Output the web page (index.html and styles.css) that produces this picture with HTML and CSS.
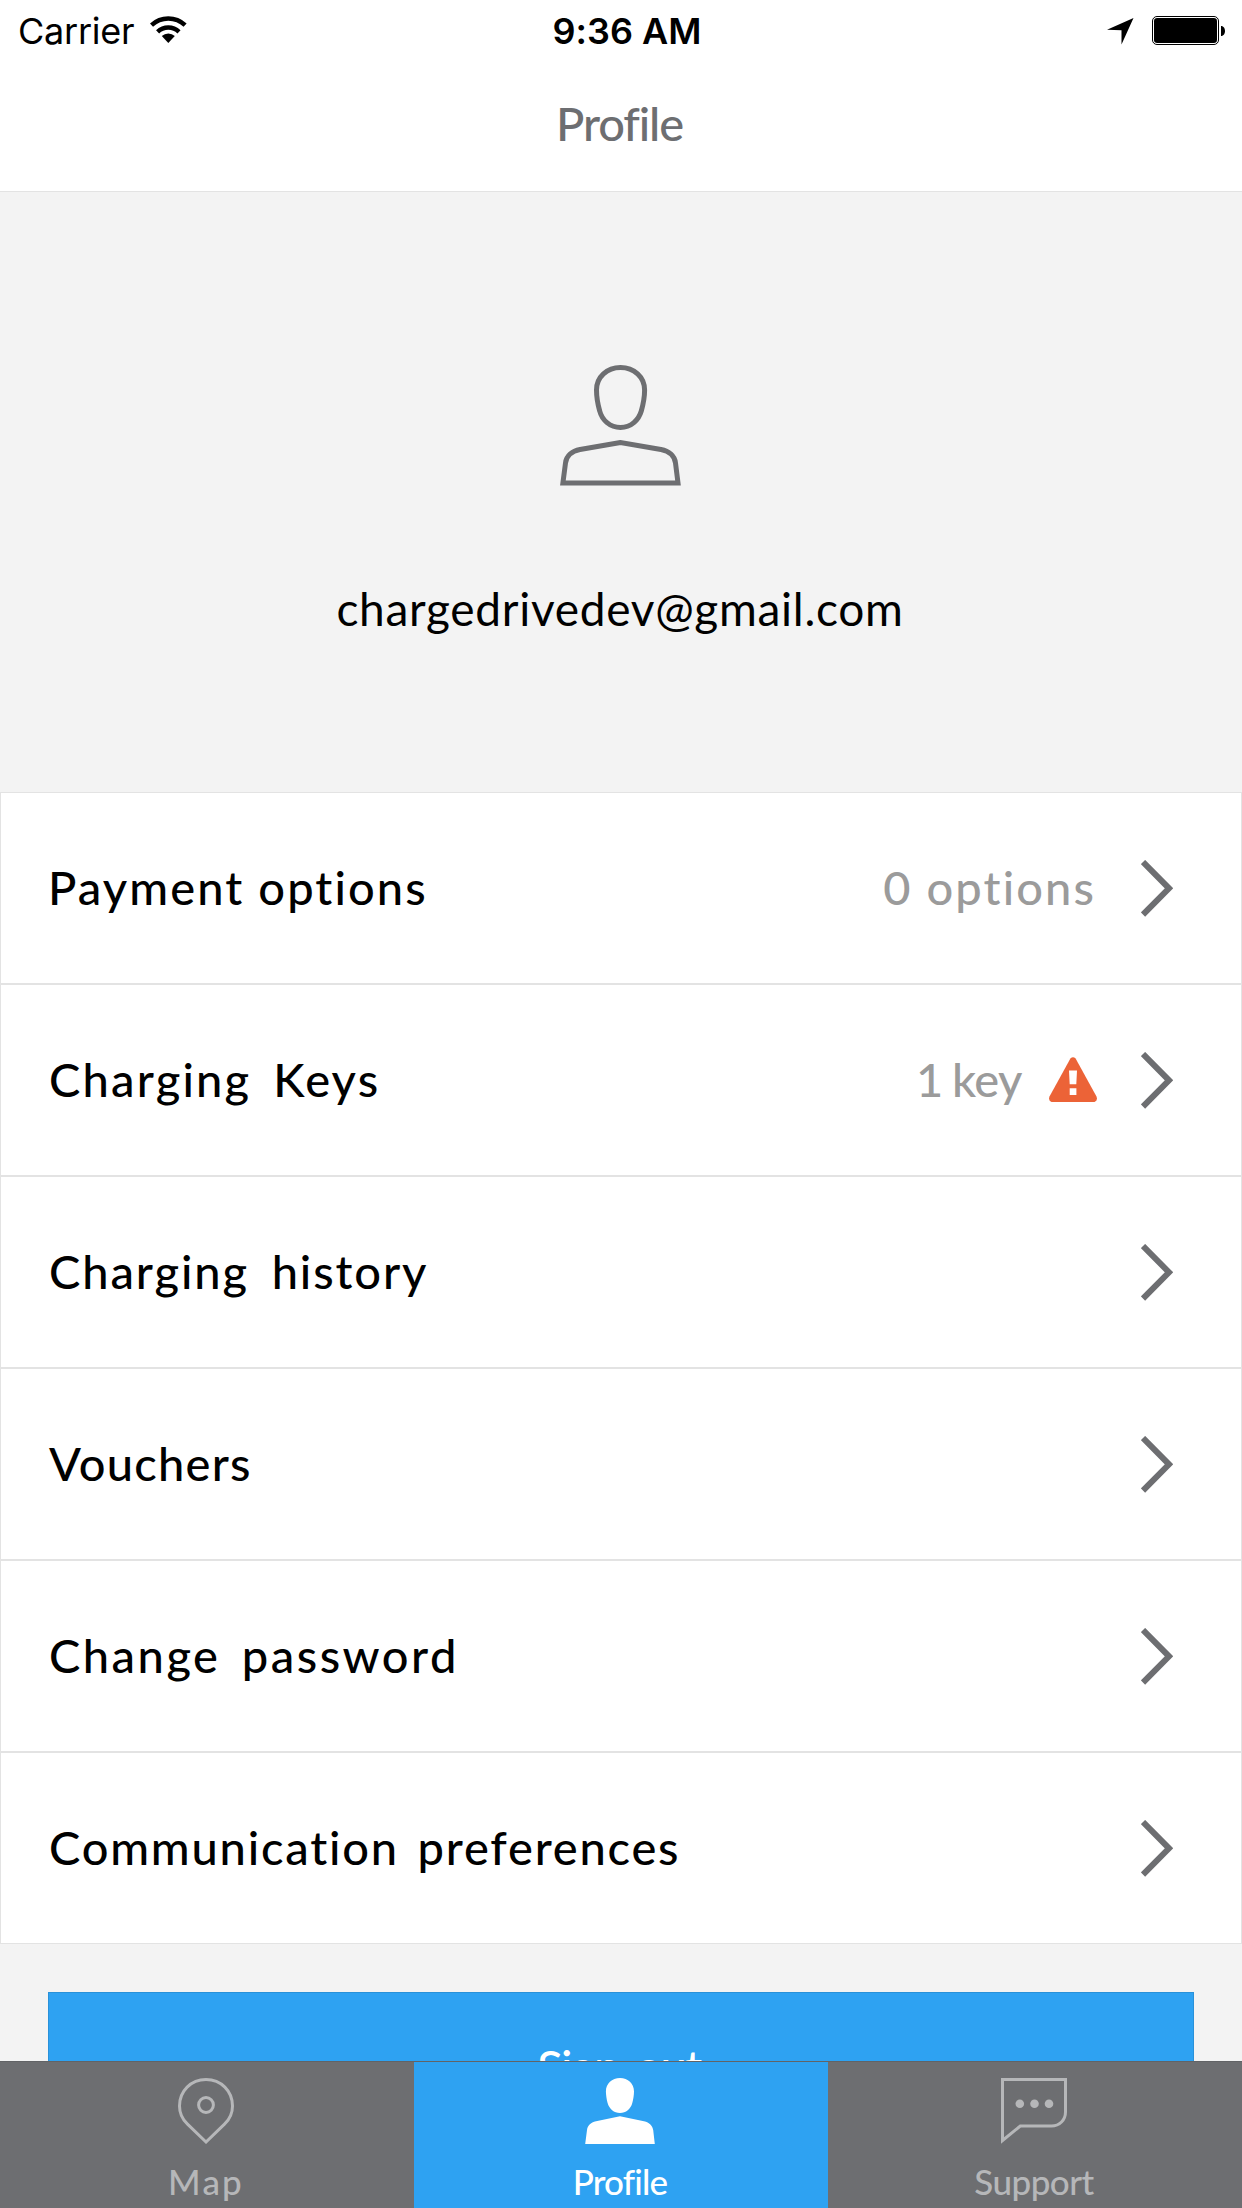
FILE: index.html
```
<!DOCTYPE html>
<html lang="en">
<head>
    <meta charset="UTF-8">
    <meta name="viewport" content="width=device-width, initial-scale=1.0">
    <title>Profile</title>
    <link rel="stylesheet" href="styles.css">
</head>
<body>
    <div class="screen">
        <header class="header">
            <div class="status-bar">
                <div class="status-left">
                    <span class="carrier">Carrier</span>
                    <svg class="wifi" width="37" height="27" viewBox="0 0 37 27">
                        <path d="M1.5 9.2A24.6 24.6 0 0 1 35.1 9.2M7.6 15.8A15.5 15.5 0 0 1 29 15.8" fill="none" stroke="#000" stroke-width="4.5"/>
                        <path d="M18.3 27L11.8 20.1A9.5 9.5 0 0 1 24.8 20.1Z"/>
                    </svg>
                </div>
                <span class="time">9:36 AM</span>
                <div class="status-right">
                    <svg class="location" width="27" height="27" viewBox="0 0 27 27">
                        <path d="M26.5 0L0 11.8L14.5 12.2V26.5Z"/>
                    </svg>
                    <svg class="battery" width="73" height="29" viewBox="0 0 73 29">
                        <rect x="0.5" y="0.5" width="66" height="28" rx="4.5" fill="none" stroke="#000"/>
                        <rect x="2" y="2" width="63" height="25" rx="3.2"/>
                        <path d="M69 10C74.3 10 74.3 20 69 20Z"/>
                    </svg>
                </div>
            </div>
            <h1 class="title">Profile</h1>
        </header>

        <main class="content">
            <section class="hero">
                <svg class="avatar" width="121" height="121" viewBox="0 0 121 121">
                    <path d="M60.5 2.5C47 2.5 36.5 12 36.5 25C36.5 31 38 40 39.7 46C42 55 50 62.5 60.5 62.5C71 62.5 78.7 55 81.3 46C83 40 84.6 31 84.6 25C84.6 12 74 2.5 60.5 2.5Z"/>
                    <path d="M60.5 77.5L20 84.5C12 86 6.3 91 5.5 98L2.9 118H118L115.5 98C114.7 91 109 86 101 84.5Z"/>
                </svg>
                <p class="email">chargedrivedev@gmail.com</p>
            </section>

            <ul class="menu">
                <li class="row">
                    <span class="label payment">Payment options</span>
                    <span class="value options">0 options</span>
                    <svg class="chevron" width="32" height="57" viewBox="0 0 32 57"><path d="M2 2L28 28.3L2 54.6"/></svg>
                </li>
                <li class="row">
                    <span class="label keys">Charging Keys</span>
                    <span class="value key">1 key</span>
                    <svg class="warning" width="48" height="45" viewBox="0 0 48 45">
                        <path d="M21.4 1.5Q24 -1.2 26.6 1.5L47.5 39.5Q49 43.5 45.5 45H2.5Q-1 43.5 0.5 39.5Z" fill="#ec6337"/>
                        <path d="M20 13.5H28L27.3 27.3H20.7ZM20.7 31.2H27.4V38H20.7Z" fill="#fff"/>
                    </svg>
                    <svg class="chevron" width="32" height="57" viewBox="0 0 32 57"><path d="M2 2L28 28.3L2 54.6"/></svg>
                </li>
                <li class="row">
                    <span class="label history">Charging history</span>
                    <svg class="chevron" width="32" height="57" viewBox="0 0 32 57"><path d="M2 2L28 28.3L2 54.6"/></svg>
                </li>
                <li class="row">
                    <span class="label vouchers">Vouchers</span>
                    <svg class="chevron" width="32" height="57" viewBox="0 0 32 57"><path d="M2 2L28 28.3L2 54.6"/></svg>
                </li>
                <li class="row">
                    <span class="label password">Change password</span>
                    <svg class="chevron" width="32" height="57" viewBox="0 0 32 57"><path d="M2 2L28 28.3L2 54.6"/></svg>
                </li>
                <li class="row">
                    <span class="label preferences">Communication preferences</span>
                    <svg class="chevron" width="32" height="57" viewBox="0 0 32 57"><path d="M2 2L28 28.3L2 54.6"/></svg>
                </li>
            </ul>

            <button class="sign-out">Sign out</button>
        </main>

        <nav class="tabs">
            <a class="tab tab-map">
                <svg width="56" height="66" viewBox="0 0 56 66" fill="none" stroke="currentColor" stroke-width="3">
                    <path d="M28 64L9.5 46.2C4 41 1.5 35 1.5 28C1.5 13 13 1.5 28 1.5S54.5 13 54.5 28C54.5 35 52 41 46.5 46.2Z"/>
                    <circle cx="28" cy="27" r="7.4"/>
                </svg>
                <span>Map</span>
            </a>
            <a class="tab tab-profile active">
                <svg width="70" height="66" viewBox="0 0 70 66" fill="currentColor">
                    <path d="M35 0C27 0 20.9 5.5 20.9 13.5C21 17 21.6 21.5 22.6 25C24.3 31 29 35 35 35S45.7 31 47.3 25C48.3 21.5 49 17 49 13.5C49 5.5 43 0 35 0Z"/>
                    <path d="M35 38.3L11 43.3C5.5 44.5 2.5 48 2 52L0.2 66H69.8L68.2 52C67.5 48 64.5 44.5 59 43.3Z"/>
                </svg>
                <span>Profile</span>
            </a>
            <a class="tab tab-support">
                <svg width="66" height="66" viewBox="0 0 66 66" fill="none" stroke="currentColor" stroke-width="3">
                    <path d="M1.5 1.5H64.5V34C64.5 42 58.5 48 50.5 48H19.3L1.5 62.5Z"/>
                    <g fill="currentColor" stroke="none">
                        <circle cx="18.8" cy="25.7" r="4.3"/>
                        <circle cx="33.5" cy="25.7" r="4.3"/>
                        <circle cx="48" cy="25.7" r="4.3"/>
                    </g>
                </svg>
                <span>Support</span>
            </a>
        </nav>
    </div>
</body>
</html>
```
FILE: styles.css
```
:root {
    --grey: #6d6e71;
    --blue: #2ea2f2;
    --line: #e3e3e3;
}

* {
    box-sizing: border-box;
}

body {
    margin: 0;
    font-family: Lato, "Liberation Sans", sans-serif;
    font-variant-ligatures: none;
    color: #000;
}

.screen {
    display: flex;
    flex-direction: column;
    width: 1242px;
    height: 2208px;
    overflow: hidden;
    background: #f3f3f3;
}

/* header */
.header {
    height: 192px;
    background: #fff;
    border-bottom: 1px solid var(--line);
}

.status-bar {
    display: grid;
    grid-template-columns: 1fr auto 1fr;
    align-items: center;
    height: 60px;
    padding: 2px 17px 0 18px;
    font-family: Inter, "Liberation Sans", sans-serif;
    font-size: 36px;
}

.status-left,
.status-right {
    display: flex;
    align-items: center;
}

.status-left {
    gap: 16px;
}

.status-right {
    justify-content: flex-end;
    gap: 18px;
}

.carrier {
    letter-spacing: -0.24px;
}

.time {
    padding-left: 11px;
    font-weight: 600;
}

.wifi {
    margin-bottom: 3px;
}

.battery {
    margin-bottom: 1px;
}

.title {
    margin: 0;
    padding: 35px 3px 0 0;
    font-size: 47px;
    font-weight: 500;
    line-height: 56px;
    letter-spacing: -1.12px;
    text-align: center;
    color: var(--grey);
}

/* profile */
.content {
    flex: 1;
    min-height: 0;
    overflow: hidden;
}

.hero {
    display: flex;
    flex-direction: column;
    align-items: center;
    height: 600px;
    padding: 173px 2px 0 0;
}

.avatar {
    fill: none;
    stroke: var(--grey);
    stroke-width: 5;
}

.email {
    margin: 95px 0 0;
    font-size: 46px;
    line-height: 56px;
    letter-spacing: 0.71px;
}

.menu {
    margin: 0;
    padding: 0;
    list-style: none;
}

.row {
    display: flex;
    align-items: center;
    height: 192px;
    padding: 0 68px 0 48px;
    background: #fff;
    border: 1px solid var(--line);
    font-size: 47px;
    font-weight: 500;
    letter-spacing: 2.1px;
}

.label {
    flex: 1;
    padding-bottom: 2px;
}

.value {
    padding-bottom: 2px;
    color: #9b9b9b;
}

.payment {
    margin-left: -1px;
}

.options {
    margin-right: 45px;
}

.key {
    margin-right: 27px;
    letter-spacing: -0.5px;
    word-spacing: -2px;
}

.keys {
    letter-spacing: 2.2px;
    word-spacing: 8px;
}

.history {
    letter-spacing: 1.9px;
    word-spacing: 9px;
}

.vouchers {
    letter-spacing: 1.25px;
}

.password {
    letter-spacing: 2.5px;
    word-spacing: 7px;
}

.preferences {
    letter-spacing: 1.8px;
    word-spacing: 5px;
}

.warning {
    margin: 0 44px 2px 0;
}

.chevron {
    fill: none;
    stroke: var(--grey);
    stroke-width: 6;
}

.sign-out {
    display: block;
    width: 1146px;
    height: 150px;
    margin: 48px auto 0;
    padding: 0 4px 2px 0;
    background: var(--blue);
    border: 1px solid #2991d9;
    color: #fff;
    font-family: inherit;
    font-size: 47px;
    font-weight: 500;
    letter-spacing: -1.5px;
    word-spacing: 6px;
}

/* bottom tabs */
.tabs {
    display: grid;
    grid-template-columns: repeat(3, 1fr);
    height: 147px;
    background: var(--grey);
    border-top: 1px solid #626366;
}

.tab {
    display: flex;
    flex-direction: column;
    align-items: center;
    gap: 16px;
    padding: 16px 2px 0 0;
    color: #b6b7b9;
    font-size: 35px;
    font-weight: 500;
    line-height: 42px;
}

.tab.active {
    background: var(--blue);
    color: #fff;
}

.tab-map {
    letter-spacing: 2.2px;
}

.tab-profile {
    letter-spacing: -0.8px;
}

.tab-support {
    letter-spacing: -0.5px;
}
```
